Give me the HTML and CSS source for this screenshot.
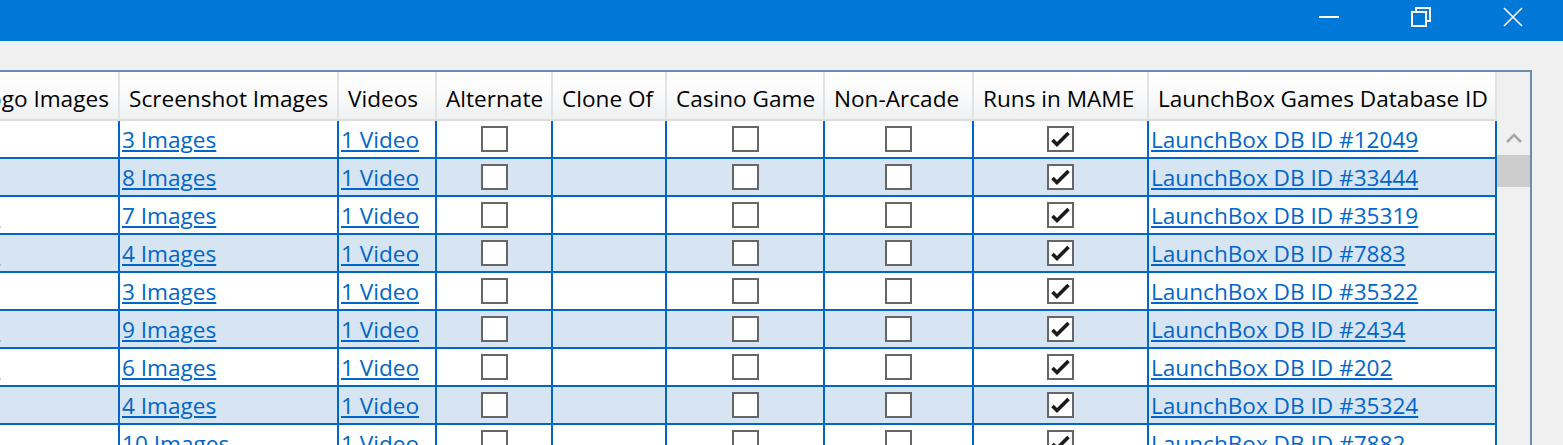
FILE: index.html
```html
<!DOCTYPE html>
<html lang="en">
<head>
    <meta charset="UTF-8">
    <meta name="viewport" content="width=device-width, initial-scale=1.0">
    <title>Arcade Games</title>
    <link rel="stylesheet" href="styles.css">
</head>
<body>

    <!-- Window title bar -->
    <div class="titlebar">
        <div class="window-controls">
            <button class="window-btn" aria-label="Minimize">
                <svg width="20" height="20" viewBox="0 0 20 20"><path d="M0 10H20" /></svg>
            </button>
            <button class="window-btn" aria-label="Restore">
                <svg width="20" height="20" viewBox="0 0 20 20">
                    <rect x="1" y="5" width="14" height="14" />
                    <path d="M5 4V1H19V14H16" />
                </svg>
            </button>
            <button class="window-btn" aria-label="Close">
                <svg width="20" height="20" viewBox="0 0 20 20"><path d="M1 1L19 19M19 1L1 19" class="thin" /></svg>
            </button>
        </div>
    </div>

    <div class="grid">
        <div class="grid-body">
            <div class="grid-rows">
                <div class="grid-row header-row">
                    <div class="head-cell">Clear Logo Images</div>
                    <div class="head-cell">Screenshot Images</div>
                    <div class="head-cell">Videos</div>
                    <div class="head-cell">Alternate</div>
                    <div class="head-cell">Clone Of</div>
                    <div class="head-cell">Casino Game</div>
                    <div class="head-cell">Non-Arcade</div>
                    <div class="head-cell">Runs in MAME</div>
                    <div class="head-cell">LaunchBox Games Database ID</div>
                </div>

                <div class="grid-row data-row">
                    <div class="cell"><a href="#">1 Image</a></div>
                    <div class="cell"><a href="#">3 Images</a></div>
                    <div class="cell"><a href="#">1 Video</a></div>
                    <div class="cell center"><span class="check"></span></div>
                    <div class="cell"></div>
                    <div class="cell center"><span class="check"></span></div>
                    <div class="cell center"><span class="check"></span></div>
                    <div class="cell center"><span class="check checked"><svg viewBox="0 0 22 22"><path d="M3 12L7.5 16.5L19 5" /></svg></span></div>
                    <div class="cell"><a href="#">LaunchBox DB ID #12049</a></div>
                </div>

                <div class="grid-row data-row alt">
                    <div class="cell"><a href="#">1 Image</a></div>
                    <div class="cell"><a href="#">8 Images</a></div>
                    <div class="cell"><a href="#">1 Video</a></div>
                    <div class="cell center"><span class="check"></span></div>
                    <div class="cell"></div>
                    <div class="cell center"><span class="check"></span></div>
                    <div class="cell center"><span class="check"></span></div>
                    <div class="cell center"><span class="check checked"><svg viewBox="0 0 22 22"><path d="M3 12L7.5 16.5L19 5" /></svg></span></div>
                    <div class="cell"><a href="#">LaunchBox DB ID #33444</a></div>
                </div>

                <div class="grid-row data-row">
                    <div class="cell"><a href="#">2 Images</a></div>
                    <div class="cell"><a href="#">7 Images</a></div>
                    <div class="cell"><a href="#">1 Video</a></div>
                    <div class="cell center"><span class="check"></span></div>
                    <div class="cell"></div>
                    <div class="cell center"><span class="check"></span></div>
                    <div class="cell center"><span class="check"></span></div>
                    <div class="cell center"><span class="check checked"><svg viewBox="0 0 22 22"><path d="M3 12L7.5 16.5L19 5" /></svg></span></div>
                    <div class="cell"><a href="#">LaunchBox DB ID #35319</a></div>
                </div>

                <div class="grid-row data-row alt">
                    <div class="cell"><a href="#">2 Images</a></div>
                    <div class="cell"><a href="#">4 Images</a></div>
                    <div class="cell"><a href="#">1 Video</a></div>
                    <div class="cell center"><span class="check"></span></div>
                    <div class="cell"></div>
                    <div class="cell center"><span class="check"></span></div>
                    <div class="cell center"><span class="check"></span></div>
                    <div class="cell center"><span class="check checked"><svg viewBox="0 0 22 22"><path d="M3 12L7.5 16.5L19 5" /></svg></span></div>
                    <div class="cell"><a href="#">LaunchBox DB ID #7883</a></div>
                </div>

                <div class="grid-row data-row">
                    <div class="cell"><a href="#">1 Image</a></div>
                    <div class="cell"><a href="#">3 Images</a></div>
                    <div class="cell"><a href="#">1 Video</a></div>
                    <div class="cell center"><span class="check"></span></div>
                    <div class="cell"></div>
                    <div class="cell center"><span class="check"></span></div>
                    <div class="cell center"><span class="check"></span></div>
                    <div class="cell center"><span class="check checked"><svg viewBox="0 0 22 22"><path d="M3 12L7.5 16.5L19 5" /></svg></span></div>
                    <div class="cell"><a href="#">LaunchBox DB ID #35322</a></div>
                </div>

                <div class="grid-row data-row alt">
                    <div class="cell"><a href="#">2 Images</a></div>
                    <div class="cell"><a href="#">9 Images</a></div>
                    <div class="cell"><a href="#">1 Video</a></div>
                    <div class="cell center"><span class="check"></span></div>
                    <div class="cell"></div>
                    <div class="cell center"><span class="check"></span></div>
                    <div class="cell center"><span class="check"></span></div>
                    <div class="cell center"><span class="check checked"><svg viewBox="0 0 22 22"><path d="M3 12L7.5 16.5L19 5" /></svg></span></div>
                    <div class="cell"><a href="#">LaunchBox DB ID #2434</a></div>
                </div>

                <div class="grid-row data-row">
                    <div class="cell"><a href="#">2 Images</a></div>
                    <div class="cell"><a href="#">6 Images</a></div>
                    <div class="cell"><a href="#">1 Video</a></div>
                    <div class="cell center"><span class="check"></span></div>
                    <div class="cell"></div>
                    <div class="cell center"><span class="check"></span></div>
                    <div class="cell center"><span class="check"></span></div>
                    <div class="cell center"><span class="check checked"><svg viewBox="0 0 22 22"><path d="M3 12L7.5 16.5L19 5" /></svg></span></div>
                    <div class="cell"><a href="#">LaunchBox DB ID #202</a></div>
                </div>

                <div class="grid-row data-row alt">
                    <div class="cell"><a href="#">1 Image</a></div>
                    <div class="cell"><a href="#">4 Images</a></div>
                    <div class="cell"><a href="#">1 Video</a></div>
                    <div class="cell center"><span class="check"></span></div>
                    <div class="cell"></div>
                    <div class="cell center"><span class="check"></span></div>
                    <div class="cell center"><span class="check"></span></div>
                    <div class="cell center"><span class="check checked"><svg viewBox="0 0 22 22"><path d="M3 12L7.5 16.5L19 5" /></svg></span></div>
                    <div class="cell"><a href="#">LaunchBox DB ID #35324</a></div>
                </div>

                <div class="grid-row data-row">
                    <div class="cell"><a href="#">1 Image</a></div>
                    <div class="cell"><a href="#">10 Images</a></div>
                    <div class="cell"><a href="#">1 Video</a></div>
                    <div class="cell center"><span class="check"></span></div>
                    <div class="cell"></div>
                    <div class="cell center"><span class="check"></span></div>
                    <div class="cell center"><span class="check"></span></div>
                    <div class="cell center"><span class="check checked"><svg viewBox="0 0 22 22"><path d="M3 12L7.5 16.5L19 5" /></svg></span></div>
                    <div class="cell"><a href="#">LaunchBox DB ID #7882</a></div>
                </div>
            </div>
        </div>

        <!-- Vertical scrollbar -->
        <div class="vscroll">
            <div class="vscroll-arrow">
                <svg width="16" height="10" viewBox="0 0 16 10"><path d="M1 9L8 2L15 9" /></svg>
            </div>
            <div class="vscroll-thumb"></div>
        </div>
    </div>

</body>
</html>
```

FILE: styles.css
```css
* {
    box-sizing: border-box;
}

body {
    margin: 0;
    height: 100vh;
    overflow: hidden;
    background: #f0f0f0;
    font-family: 'Open Sans', 'Noto Sans', sans-serif;
    font-size: 22.6px;
    line-height: 31px;
    color: #000000;
}

/* Title bar */
.titlebar {
    height: 41px;
    background: #0078d7;
    display: flex;
    justify-content: flex-end;
    padding-right: 4px;
}

.window-controls {
    display: flex;
    align-items: flex-start;
}

.window-btn {
    width: 92px;
    height: 34px;
    padding: 0;
    border: none;
    background: transparent;
    display: flex;
    align-items: center;
    justify-content: center;
    cursor: pointer;
}

.window-btn svg {
    fill: none;
    stroke: #ffffff;
    stroke-width: 2;
}

.window-btn svg .thin {
    stroke-width: 1.6;
}

/* Data grid */
.grid {
    margin: 29px 31px 0 0;
    border-top: 2px solid #6d8cb1;
    border-right: 2px solid #6d8cb1;
    background: #f0f0f0;
    display: flex;
    height: 400px;
}

.grid-body {
    flex: 1;
    overflow: hidden;
}

.grid-rows {
    margin-left: -96px;
    width: 1593px;
}

.grid-row {
    display: grid;
    grid-template-columns: 216px 219px 98px 116px 114px 158px 149px 175px 348px;
}

.header-row {
    height: 49px;
    border-bottom: 2px solid #dcdcdc;
    background: linear-gradient(to bottom, #ffffff 0%, #fbfbfb 45%, #eef0f2 100%);
}

.head-cell {
    padding: 11px 0 0 9px;
    border-right: 2px solid #e2e3e5;
    white-space: nowrap;
    overflow: hidden;
}

.head-cell:first-child {
    padding-left: 12px;
}

.data-row {
    height: 38px;
    background: #ffffff;
    border-bottom: 2px solid #0066cc;
}

.data-row.alt {
    background: #d7e4f2;
}

.cell {
    display: flex;
    align-items: center;
    padding: 1px 0 0 2px;
    border-right: 2px solid #0066cc;
    white-space: nowrap;
    overflow: hidden;
}

.cell.center {
    justify-content: center;
    padding: 0;
}

.cell a {
    color: #0066cc;
    text-decoration: underline;
}

.check {
    width: 27px;
    height: 26px;
    border: 2px solid #666666;
    background: #ffffff;
    display: block;
}

.check svg {
    display: block;
    width: 23px;
    height: 22px;
    fill: none;
    stroke: #1a1a1a;
    stroke-width: 3.6;
}

/* Scrollbar */
.vscroll {
    width: 33px;
    padding-top: 49px;
}

.vscroll-arrow {
    height: 34px;
    display: flex;
    align-items: center;
    justify-content: center;
}

.vscroll-arrow svg {
    fill: none;
    stroke: #a6a6a6;
    stroke-width: 2.5;
}

.vscroll-thumb {
    height: 32px;
    background: #cdcdcd;
}
```
